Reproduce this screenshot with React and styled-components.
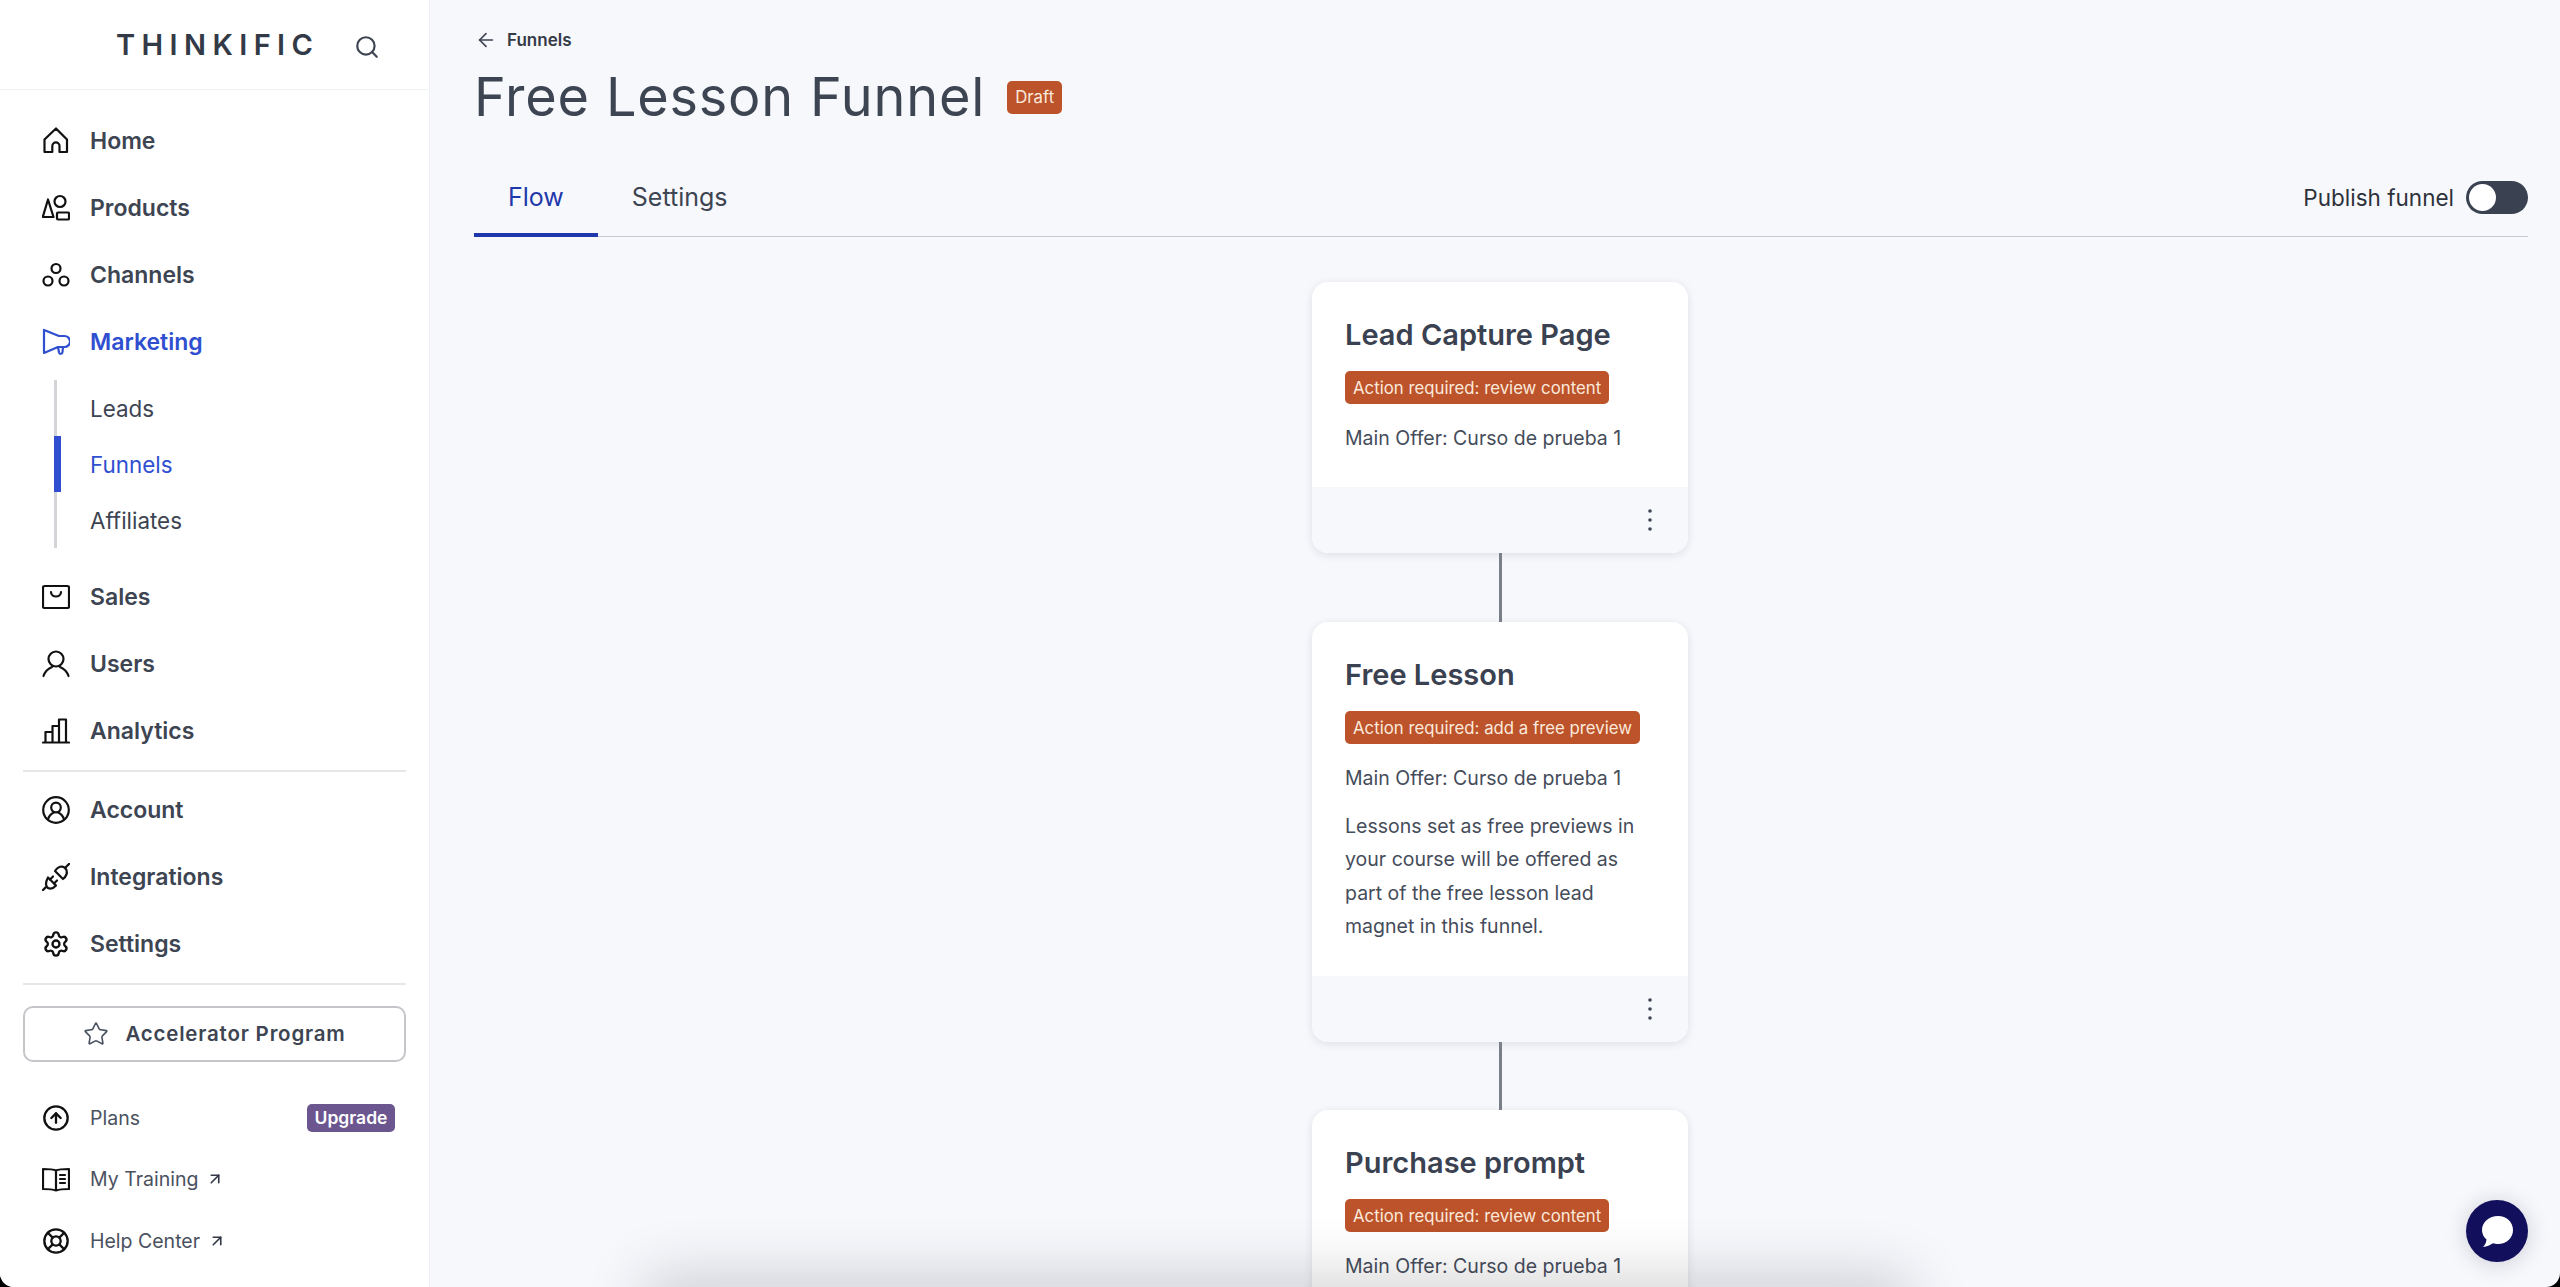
import React from 'react';
import styled, { createGlobalStyle } from 'styled-components';
import { Search, Settings, LifeBuoy, CircleArrowUp, Star, ArrowLeft, ArrowUpRight } from 'lucide-react';

const GlobalStyle = createGlobalStyle`
  html, body { margin: 0; padding: 0; background: #000; }
  * { box-sizing: border-box; }
`;

const Shell = styled.div`
  position: relative;
  display: flex;
  width: 2560px;
  height: 1287px;
  overflow: hidden;
  border-radius: 0 0 14px 14px;
  background: #f7f8fc;
  font-family: Inter, "Noto Sans", sans-serif;
  color: #3d4452;
`;

const Sidebar = styled.aside`
  width: 430px;
  flex: none;
  display: flex;
  flex-direction: column;
  background: #fff;
  border-right: 1px solid #eeeff1;
`;

const Brand = styled.div`
  height: 90px;
  flex: none;
  display: flex;
  align-items: center;
  padding: 0 49px 0 116px;
  justify-content: space-between;
  border-bottom: 1px solid #f1f2f4;
  svg { margin-top: 4px; }
`;

const Logo = styled.span`
  font-size: 29px;
  font-weight: 600;
  letter-spacing: 6.4px;
  color: #333a47;
  line-height: 1;
`;

const Nav = styled.nav`
  padding: 17px 0 0;
  display: flex;
  flex-direction: column;
`;

const NavItem = styled.a`
  height: 67px;
  display: flex;
  align-items: center;
  gap: 20px;
  padding-left: 42px;
  font-size: 23px;
  font-weight: 600;
  color: ${(p) => (p.$active ? '#2f4fd0' : '#3d4452')};
  svg { flex: none; }
`;

const SubList = styled.div`
  margin: 5px 0 15.5px 54px;
  border-left: 3px solid #d4d5d8;
  display: flex;
  flex-direction: column;
`;

const SubItem = styled.a`
  position: relative;
  height: 56px;
  display: flex;
  align-items: center;
  padding-left: 33px;
  font-size: 22.4px;
  font-weight: 400;
  color: ${(p) => (p.$active ? '#2f4fd0' : '#3d4452')};
  ${(p) => p.$active && `
    &::before {
      content: '';
      position: absolute;
      left: -3px;
      top: 0;
      bottom: 0;
      width: 7px;
      background: #2f4fd0;
    }
  `}
`;

const Divider = styled.hr`
  margin: 5px 23px;
  width: 383px;
  border: 0;
  border-top: 2px solid #e6e7e9;
`;

const ProgramButton = styled.button`
  margin: 16px 23px 25.5px;
  width: 383px;
  height: 56px;
  flex: none;
  display: flex;
  align-items: center;
  justify-content: center;
  gap: 16px;
  padding-left: 6px;
  background: #fff;
  border: 2px solid #c5c6ca;
  border-radius: 10px;
  font-family: Inter, "Noto Sans", sans-serif;
  font-size: 20.5px;
  font-weight: 600;
  letter-spacing: 0.8px;
  color: #3d4452;
`;

const FootItem = styled.a`
  height: 61.5px;
  display: flex;
  align-items: center;
  gap: 20px;
  padding: 0 34px 0 42px;
  font-size: 19.5px;
  font-weight: 400;
  color: #4a5160;
  svg { flex: none; }
`;

const FootLabel = styled.span`
  display: flex;
  align-items: center;
  gap: 8px;
  flex: 1;
`;

const Upgrade = styled.span`
  width: 88px;
  height: 28px;
  display: flex;
  align-items: center;
  justify-content: center;
  border-radius: 5px;
  background: #6b5690;
  color: #fff;
  font-size: 17.5px;
  font-weight: 600;
`;

const Main = styled.main`
  flex: 1;
  min-width: 0;
  padding: 0 32px 0 44px;
`;

const Crumb = styled.a`
  height: 79px;
  padding: 0 0 0 1px;
  display: flex;
  align-items: center;
  gap: 10px;
  font-size: 17px;
  font-weight: 600;
  color: #343a46;
`;

const TitleRow = styled.div`
  height: 36px;
  display: flex;
  align-items: center;
  gap: 22px;
`;

const Title = styled.h1`
  margin: 0;
  font-size: 54px;
  font-weight: 400;
  line-height: 1;
  letter-spacing: 0.8px;
  color: #3d4452;
`;

const Badge = styled.span`
  display: flex;
  width: fit-content;
  align-items: center;
  height: ${(p) => (p.$tall ? '34px' : '33px')};
  padding: 0 8px;
  border-radius: 5px;
  background: #bc532a;
  color: #fbe9dc;
  font-size: 16.8px;
  font-weight: 400;
  white-space: nowrap;
`;

const TabBar = styled.div`
  margin-top: 46px;
  height: 76px;
  display: flex;
  align-items: stretch;
  justify-content: space-between;
  border-bottom: 1px solid #c9ccd4;
`;

const Tabs = styled.div`
  display: flex;
`;

const Tab = styled.a`
  padding: 0 34px 1px;
  display: flex;
  align-items: center;
  font-size: 25px;
  height: 76px;
  font-weight: 400;
  color: ${(p) => (p.$active ? '#1f38ab' : '#3d4452')};
  border-bottom: 4px solid ${(p) => (p.$active ? '#1f38ab' : 'transparent')};
`;

const Publish = styled.label`
  display: flex;
  align-items: center;
  gap: 12px;
  padding-bottom: 2px;
  font-size: 22.5px;
  color: #2d313a;
`;

const Toggle = styled.span`
  position: relative;
  width: 62px;
  height: 33px;
  border-radius: 17px;
  background: #3a4151;
  &::after {
    content: '';
    position: absolute;
    left: 3px;
    top: 3px;
    width: 27px;
    height: 27px;
    border-radius: 50%;
    background: #fff;
  }
`;

const Flow = styled.div`
  padding: 45px 2px 0 0;
  display: flex;
  flex-direction: column;
  align-items: center;
`;

const Card = styled.section`
  width: 376px;
  flex: none;
  border-radius: 16px;
  overflow: hidden;
  background: #fff;
  box-shadow: 0 2px 8px rgba(40, 45, 60, 0.12);
`;

const CardBody = styled.div`
  padding: 33px 33px 0;
  min-height: ${(p) => p.$min}px;
`;

const CardTitle = styled.h3`
  margin: 0 0 16px;
  font-size: 29px;
  font-weight: 600;
  line-height: 40px;
  color: #3a4150;
`;

const CardText = styled.p`
  margin: 18px 0 0;
  font-size: 19.5px;
  line-height: 33.5px;
  color: #454c5a;
`;

const LessonText = styled(CardText)`
  margin-top: 14px;
  max-width: 292px;
`;

const CardFoot = styled.div`
  height: 66px;
  display: flex;
  align-items: center;
  justify-content: flex-end;
  padding-right: 35px;
  background: #f7f8fc;
  color: #3d4452;
`;

const Connector = styled.div`
  width: 3px;
  height: ${(p) => p.$h}px;
  flex: none;
  background: #7b7f8a;
`;

const BottomGlow = styled.div`
  position: absolute;
  left: 665px;
  width: 1225px;
  top: 1297px;
  height: 20px;
  box-shadow: 0 0 60px 20px rgba(30, 30, 40, 0.2);
`;

const Chat = styled.button`
  position: absolute;
  right: 32px;
  bottom: 25px;
  width: 62px;
  height: 62px;
  padding: 0;
  border: 0;
  border-radius: 50%;
  display: flex;
  align-items: center;
  justify-content: center;
  background: #120f5c;
  box-shadow: 0 2px 22px rgba(20, 20, 40, 0.18);
`;

const Ico = ({ color = '#111', children }) => (
  <svg width="28" height="28" viewBox="0 0 28 28" fill="none" stroke={color} strokeWidth="2.200" strokeLinejoin="round" strokeLinecap="round">
    {children}
  </svg>
);

const icons = {
  home: <Ico><path d="M2.5 12.5 14 1.5l11 11V25h-7.500v-6a3.600 3.600 0 0 0-7.200 0v6H2.500Z" /></Ico>,
  products: <Ico><circle cx="18" cy="7.500" r="5.500" /><path d="M6 5.500 11.500 23H.8Z" /><rect x="15" y="18.500" width="12" height="7" rx="1" /></Ico>,
  channels: <Ico><circle cx="14" cy="7.500" r="4.500" /><circle cx="6" cy="20" r="4.500" /><circle cx="22" cy="20" r="4.500" /></Ico>,
  marketing: <Ico color="#2f4fd0"><path d="M2 2v23l14-6h6.500a5.500 5.500 0 0 0 0-11H17Z" /><path d="m16 19 1 5.500c.5 2 3.500 1.500 3.500-.5l.5-5" /></Ico>,
  sales: <Ico><rect x="1" y="3" width="26" height="22" rx="1.500" /><path d="M9 9c0 6 10 6 10 0" /></Ico>,
  users: <Ico><circle cx="14" cy="9" r="7.500" /><path d="M1.500 26c1.500-4.500 5-7.500 8.500-9M26.500 26c-1.500-4.500-5-7.500-8.500-9" /></Ico>,
  analytics: <Ico><path d="M1 25.500h26" /><path d="M3.500 25V15h7v10M10.500 25V9h6.500v16M17 25V2.500h7V25" /></Ico>,
  account: <Ico><circle cx="14" cy="14" r="12.800" /><circle cx="14" cy="11.500" r="4.800" /><path d="M6 23.500c1-4 3.500-6 6-7M22 23.500c-1-4-3.500-6-6-7" /></Ico>,
  integrations: <Ico><path d="m.8 27.200 2.800-2.800" /><path d="M6 14.500 14 22.500Q10 27 6 25 2 22 6 14.500Z" /><path d="m8 16.500 3-3M12 20.500l3-3" /><path d="M13 8 21 16Q26 12 24.500 7 23 4 20 3.500 16 3.500 13 8Z" /><path d="m23.500 4.500 3.700-3.700" /></Ico>,
  book: <Ico><path d="M14 5.500C11 4 6 4 1 4v20c5 0 9 0 13 1.500 4-1.500 8-1.500 13-1.500V4c-5 0-10 0-13 1.500ZM14 5.500v20" /><path d="M18 10h5M18 14h5M18 18h5" /></Ico>,
};

const Dots = () => (
  <svg width="6" height="24" viewBox="0 0 6 24" fill="currentColor">
    <circle cx="3" cy="3" r="1.800" /><circle cx="3" cy="12" r="1.800" /><circle cx="3" cy="21" r="1.800" />
  </svg>
);

export default function App() {
  return (
    <Shell>
      <GlobalStyle />
      <Sidebar>
        <Brand>
          <Logo>THINKIFIC</Logo>
          <Search size={26} color="#3d4452" strokeWidth={2} />
        </Brand>
        <Nav>
          <NavItem>{icons.home}Home</NavItem>
          <NavItem>{icons.products}Products</NavItem>
          <NavItem>{icons.channels}Channels</NavItem>
          <NavItem $active>{icons.marketing}Marketing</NavItem>
          <SubList>
            <SubItem>Leads</SubItem>
            <SubItem $active>Funnels</SubItem>
            <SubItem>Affiliates</SubItem>
          </SubList>
          <NavItem>{icons.sales}Sales</NavItem>
          <NavItem>{icons.users}Users</NavItem>
          <NavItem>{icons.analytics}Analytics</NavItem>
          <Divider />
          <NavItem>{icons.account}Account</NavItem>
          <NavItem>{icons.integrations}Integrations</NavItem>
          <NavItem><Settings size={28} color="#111" strokeWidth={2} />Settings</NavItem>
          <Divider />
        </Nav>
        <ProgramButton><Star size={26} color="#4a5160" strokeWidth={1.500} />Accelerator Program</ProgramButton>
        <FootItem>
          <CircleArrowUp size={28} color="#111" strokeWidth={2} />
          <FootLabel>Plans</FootLabel>
          <Upgrade>Upgrade</Upgrade>
        </FootItem>
        <FootItem>
          {icons.book}
          <FootLabel>My Training <ArrowUpRight size={18} color="#333a47" strokeWidth={2.200} /></FootLabel>
        </FootItem>
        <FootItem>
          <LifeBuoy size={28} color="#111" strokeWidth={2} />
          <FootLabel>Help Center <ArrowUpRight size={18} color="#333a47" strokeWidth={2.200} /></FootLabel>
        </FootItem>
      </Sidebar>
      <Main>
        <Crumb><ArrowLeft size={22} color="#3d4452" strokeWidth={1.800} />Funnels</Crumb>
        <TitleRow>
          <Title>Free Lesson Funnel</Title>
          <Badge>Draft</Badge>
        </TitleRow>
        <TabBar>
          <Tabs>
            <Tab $active>Flow</Tab>
            <Tab>Settings</Tab>
          </Tabs>
          <Publish>Publish funnel <Toggle /></Publish>
        </TabBar>
        <Flow>
          <Card>
            <CardBody $min={205}>
              <CardTitle>Lead Capture Page</CardTitle>
              <Badge>Action required: review content</Badge>
              <CardText>Main Offer: Curso de prueba 1</CardText>
            </CardBody>
            <CardFoot><Dots /></CardFoot>
          </Card>
          <Connector $h={69} />
          <Card>
            <CardBody $min={354}>
              <CardTitle>Free Lesson</CardTitle>
              <Badge>Action required: add a free preview</Badge>
              <CardText>Main Offer: Curso de prueba 1</CardText>
              <LessonText>Lessons set as free previews in your course will be offered as part of the free lesson lead magnet in this funnel.</LessonText>
            </CardBody>
            <CardFoot><Dots /></CardFoot>
          </Card>
          <Connector $h={68} />
          <Card>
            <CardBody $min={205}>
              <CardTitle>Purchase prompt</CardTitle>
              <Badge>Action required: review content</Badge>
              <CardText>Main Offer: Curso de prueba 1</CardText>
            </CardBody>
          </Card>
        </Flow>
      </Main>
      <BottomGlow />
      <Chat aria-label="Chat">
        <svg width="34" height="34" viewBox="0 0 34 34" fill="#fff">
          <path d="M18 2c8.500 0 15 6 15 14s-6.500 14-15 14c-2 0-3.500-.3-5-.8C10 31 7 32.500 3 33c2-2 3.200-4.500 3.500-7.500C3.500 23 2 19.500 2 16 2 8 9.500 2 18 2Z" />
        </svg>
      </Chat>
    </Shell>
  );
}
